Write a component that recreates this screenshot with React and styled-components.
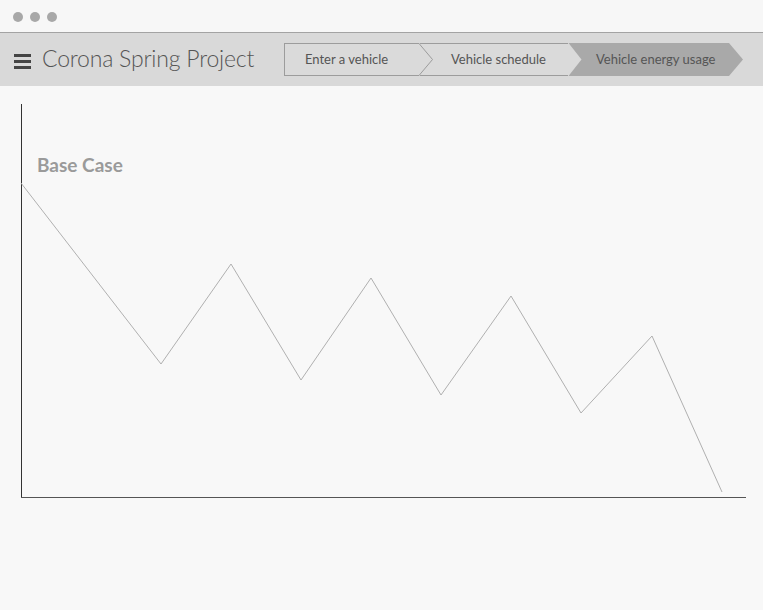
import React from "react";
import styled, { createGlobalStyle } from "styled-components";

const GlobalStyle = createGlobalStyle`
  html, body {
    margin: 0;
    padding: 0;
    background: #f8f8f8;
    font-family: Lato, "Open Sans", sans-serif;
  }
`;

const Window = styled.div`
  width: 763px;
  height: 610px;
  display: flex;
  flex-direction: column;
  background: #f8f8f8;
  overflow: hidden;
`;

const TitleBar = styled.div`
  height: 33px;
  flex-shrink: 0;
  display: flex;
  align-items: center;
  gap: 7px;
  padding-left: 13px;
  background: #f7f7f7;
  border-bottom: 1px solid #a3a3a3;
  box-sizing: border-box;
`;

const Dot = styled.span`
  width: 10px;
  height: 10px;
  border-radius: 50%;
  background: #a8a8a8;
  margin-top: 1px;
`;

const Header = styled.header`
  height: 53px;
  flex-shrink: 0;
  display: flex;
  align-items: center;
  background: #d9d9d9;
  padding-left: 14px;
  box-sizing: border-box;
`;

const Burger = styled.div`
  width: 17px;
  display: flex;
  flex-direction: column;
  gap: 3px;
  margin-top: 3px;

  span {
    height: 3px;
    background: #444;
  }
`;

const Title = styled.h1`
  margin: 0 0 3px 11px;
  font-size: 23px;
  font-weight: 300;
  color: #555;
  letter-spacing: -0.2px;
  width: 242px;
  white-space: nowrap;
`;

const Steps = styled.nav`
  display: flex;
  height: 33px;
`;

const Step = styled.div`
  position: relative;
  width: ${(p) => p.$width}px;
  box-sizing: border-box;
  display: flex;
  align-items: center;
  padding-left: ${(p) => p.$pad}px;
  padding-bottom: 2px;
  font-size: 13px;
  color: #555;
  white-space: nowrap;
  background: ${(p) => (p.$active ? "#a9a9a9" : "#dadada")};
  border-top: ${(p) => (p.$active ? "none" : "1px solid #9c9c9c")};
  border-bottom: ${(p) => (p.$active ? "none" : "1px solid #9c9c9c")};
  border-left: ${(p) => (p.$first ? "1px solid #9c9c9c" : "none")};
  clip-path: ${(p) =>
    p.$active
      ? "polygon(0 0, calc(100% - 14px) 0, 100% 50%, calc(100% - 14px) 100%, 0 100%)"
      : "none"};
  z-index: ${(p) => p.$layer};
`;

const Chevron = styled.svg`
  position: absolute;
  top: -1px;
  right: -14px;
  width: 14px;
  height: 33px;
  overflow: visible;
`;

const ChartArea = styled.main`
  position: relative;
  flex: 1;
`;

const Legend = styled.div`
  position: absolute;
  left: 37px;
  top: 67px;
  font-size: 19px;
  font-weight: 700;
  color: #9a9a9a;
`;

const points = [
  [21, 183], [161, 364], [231, 264], [301, 380], [371, 278],
  [441, 395], [511, 296], [581, 413], [652, 336], [722, 492],
];

const steps = [
  { label: "Enter a vehicle", width: 135, pad: 20, first: true, stroke: true },
  { label: "Vehicle schedule", width: 149, pad: 32, stroke: false },
  { label: "Vehicle energy usage", width: 175, pad: 28, active: true },
];

const ChevronShape = ({ stroke }) => (
  <Chevron viewBox="0 0 14 33">
    <polygon points="0,0 0.5,0 13.5,16.5 0.5,33 0,33" fill="#dadada" />
    <polyline points="0,0.5 13.5,16.5 0,32.5" fill="none" stroke={stroke ? "#9c9c9c" : "none"} strokeWidth="1" />
  </Chevron>
);

const App = () => {
  const offsetY = 86;
  const line = points.map(([x, y]) => `${x},${y - offsetY}`).join(" ");

  return (
    <Window>
      <GlobalStyle />
      <TitleBar>
        <Dot />
        <Dot />
        <Dot />
      </TitleBar>
      <Header>
        <Burger>
          <span />
          <span />
          <span />
        </Burger>
        <Title>Corona Spring Project</Title>
        <Steps>
          {steps.map((s, i) => (
            <Step
              key={s.label}
              $width={s.width}
              $pad={s.pad}
              $first={s.first}
              $active={s.active}
              $layer={steps.length - i}
            >
              {s.label}
              {!s.active && <ChevronShape stroke={s.stroke} />}
            </Step>
          ))}
        </Steps>
      </Header>
      <ChartArea>
        <svg width="763" height="524" style={{ display: "block" }}>
          <line x1="21.5" y1={104 - offsetY} x2="21.5" y2={497.5 - offsetY} stroke="#333" strokeWidth="1" />
          <line x1="21" y1={497.5 - offsetY} x2="746" y2={497.5 - offsetY} stroke="#555" strokeWidth="1" />
          <polyline points={line} fill="none" stroke="#b0b0b0" strokeWidth="1" />
        </svg>
        <Legend>Base Case</Legend>
      </ChartArea>
    </Window>
  );
};

export default App;
